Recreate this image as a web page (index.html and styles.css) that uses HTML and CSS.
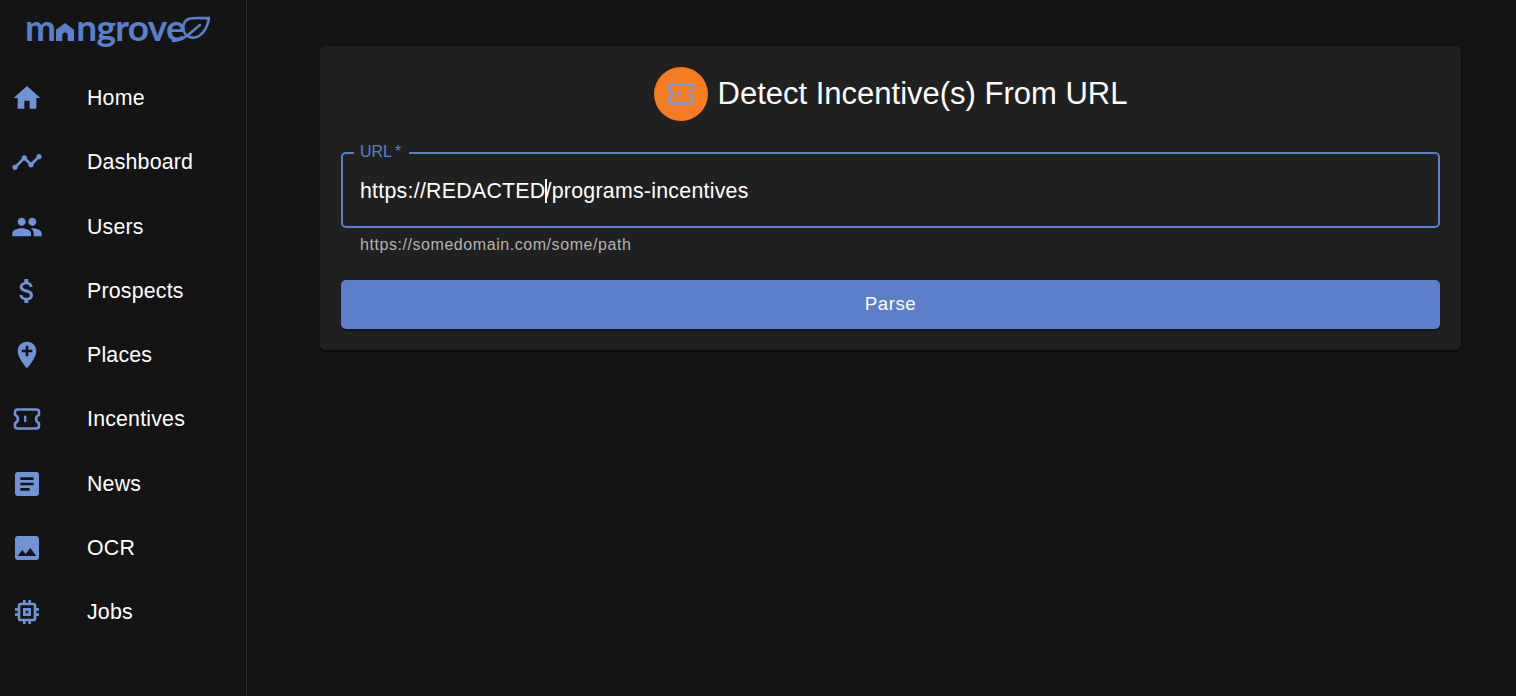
FILE: index.html
```html
<!DOCTYPE html>
<html lang="en">
<head>
    <meta charset="UTF-8">
    <title>Detect Incentives</title>
    <link rel="stylesheet" href="styles.css">
</head>

<body>
    <svg class="defs" width="0" height="0">
        <symbol id="ticket" viewBox="0 0 24 24">
            <path class="ticket-line" d="M5 4.900H19a2 2 0 0 1 2 2v2c-1.500.6-2.200 1.700-2.200 3.100s.7 2.500 2.200 3.100v2a2 2 0 0 1-2 2H5a2 2 0 0 1-2-2v-2c1.500-.6 2.200-1.700 2.200-3.100s-.7-2.500-2.200-3.100v-2a2 2 0 0 1 2-2z"/>
            <path d="M9.800 9.500h1.700v4.700H9.800z"/>
        </symbol>
    </svg>

    <aside class="sidebar">
        <div class="logo">
            <span class="logo-text">m<svg class="logo-house" viewBox="0 0 20 20"><path d="M10 0 20 7.500V20H13V13.500a3 3 0 0 0-6 0V20H0V7.500z"/></svg>ngrove</span>
            <svg class="logo-leaf" viewBox="0 0 40 30"><path d="M39 3C33 3.500 26 2.500 20 3.500 14 5 12 11 14 17 17 23 24 24 29 21 35 17 38 10 39 3z"/><path d="M3 26C10 26 14 23 18 20 22 17 26 13 30 10"/></svg>
        </div>
        <nav class="nav">
            <a class="nav-item"><svg class="nav-icon" viewBox="0 0 24 24"><path d="M10 20v-6h4v6h5v-8h3L12 3 2 12h3v8z"/></svg><span class="nav-label">Home</span></a>
            <a class="nav-item"><svg class="nav-icon" viewBox="0 0 24 24"><path d="M23 8c0 1.100-.9 2-2 2-.18 0-.35-.02-.51-.07l-3.560 3.550c.05.16.07.34.07.52 0 1.100-.9 2-2 2s-2-.9-2-2c0-.18.02-.36.07-.52l-2.550-2.550c-.16.05-.34.07-.52.07s-.36-.02-.52-.07l-4.550 4.560c.05.16.07.33.07.51 0 1.100-.9 2-2 2s-2-.9-2-2 .9-2 2-2c.18 0 .35.02.51.07l4.560-4.550C8.020 9.360 8 9.180 8 9c0-1.100.9-2 2-2s2 .9 2 2c0 .18-.02.36-.07.52l2.550 2.550c.16-.05.34-.07.52-.07s.36.02.52.07l3.550-3.560C19.020 8.350 19 8.180 19 8c0-1.100.9-2 2-2s2 .9 2 2z"/></svg><span class="nav-label">Dashboard</span></a>
            <a class="nav-item"><svg class="nav-icon" viewBox="0 0 24 24"><path d="M16 11c1.660 0 2.990-1.340 2.990-3S17.660 5 16 5c-1.660 0-3 1.340-3 3s1.340 3 3 3zm-8 0c1.660 0 2.990-1.340 2.990-3S9.660 5 8 5C6.340 5 5 6.340 5 8s1.340 3 3 3zm0 2c-2.330 0-7 1.170-7 3.500V19h14v-2.500c0-2.330-4.670-3.500-7-3.500zm8 0c-.29 0-.62.02-.97.05 1.160.84 1.970 1.970 1.970 3.450V19h6v-2.500c0-2.330-4.670-3.500-7-3.500z"/></svg><span class="nav-label">Users</span></a>
            <a class="nav-item"><svg class="nav-icon" viewBox="0 0 24 24"><path d="M11.800 10.900c-2.270-.59-3-1.200-3-2.150 0-1.090 1.010-1.850 2.700-1.850 1.780 0 2.440.85 2.500 2.100h2.210c-.07-1.720-1.120-3.300-3.210-3.810V3h-3v2.160c-1.940.42-3.500 1.680-3.500 3.610 0 2.310 1.910 3.460 4.700 4.130 2.500.6 3 1.480 3 2.410 0 .69-.49 1.790-2.700 1.790-2.060 0-2.870-.92-2.980-2.100h-2.200c.12 2.190 1.760 3.420 3.680 3.830V21h3v-2.150c1.950-.37 3.500-1.500 3.500-3.550 0-2.840-2.430-3.810-4.700-4.400z"/></svg><span class="nav-label">Prospects</span></a>
            <a class="nav-item"><svg class="nav-icon" viewBox="0 0 24 24"><path d="M12 2C8.140 2 5 5.140 5 9c0 5.250 7 13 7 13s7-7.750 7-13c0-3.860-3.140-7-7-7zm4 8h-3v3h-2v-3H8V8h3V5h2v3h3v2z"/></svg><span class="nav-label">Places</span></a>
            <a class="nav-item"><svg class="nav-icon"><use href="#ticket"/></svg><span class="nav-label">Incentives</span></a>
            <a class="nav-item"><svg class="nav-icon" viewBox="0 0 24 24"><path d="M19 3H5c-1.100 0-2 .9-2 2v14c0 1.100.9 2 2 2h14c1.100 0 2-.9 2-2V5c0-1.100-.9-2-2-2zm-5 14H7v-2h7v2zm3-4H7v-2h10v2zm0-4H7V7h10v2z"/></svg><span class="nav-label">News</span></a>
            <a class="nav-item"><svg class="nav-icon" viewBox="0 0 24 24"><path d="M21 19V5c0-1.100-.9-2-2-2H5c-1.100 0-2 .9-2 2v14c0 1.100.9 2 2 2h14c1.100 0 2-.9 2-2zM8.500 13.500l2.500 3.010L14.500 12l4.500 6H5l3.500-4.500z"/></svg><span class="nav-label">OCR</span></a>
            <a class="nav-item"><svg class="nav-icon" viewBox="0 0 24 24"><path d="M15 9H9v6h6V9zm-2 4h-2v-2h2v2zm8-2V9h-2V7c0-1.100-.9-2-2-2h-2V3h-2v2h-2V3H9v2H7c-1.100 0-2 .9-2 2v2H3v2h2v2H3v2h2v2c0 1.100.9 2 2 2h2v2h2v-2h2v2h2v-2h2c1.100 0 2-.9 2-2v-2h2v-2h-2v-2h2zm-4 6H7V7h10v10z"/></svg><span class="nav-label">Jobs</span></a>
        </nav>
    </aside>

    <main class="content">
        <section class="card">
            <header class="card-title">
                <span class="avatar"><svg class="avatar-icon"><use href="#ticket"/></svg></span>
                <h1>Detect Incentive(s) From URL</h1>
            </header>
            <div class="field">
                <span class="field-label">URL<span class="required">*</span></span>
                <div class="field-value">https://REDACTED<span class="caret"></span>/programs-incentives</div>
            </div>
            <p class="helper">https://somedomain.com/some/path</p>
            <button class="parse-btn">Parse</button>
        </section>
    </main>
</body></html>
```

FILE: styles.css
```css
* {
    box-sizing: border-box;
}

body {
    margin: 0;
    height: 696px;
    display: flex;
    overflow: hidden;
    background-color: #141414;
    color: #fff;
    font-family: "Liberation Sans", Arial, sans-serif;
}

.defs {
    position: absolute;
}

.ticket-line {
    fill: none;
    stroke: currentColor;
    stroke-width: 1.9;
    stroke-linejoin: round;
}

.sidebar {
    width: 247px;
    flex-shrink: 0;
    border-right: 1px solid #2c2c2c;
}

.logo {
    height: 66px;
    padding: 7px 0 0 25px;
    display: flex;
    align-items: flex-start;
    color: #5a7fcb;
}

.logo-text {
    display: flex;
    align-items: baseline;
    font-family: Lato, sans-serif;
    font-size: 37px;
    font-weight: 700;
    line-height: 40px;
    letter-spacing: -0.7px;
}

.logo-house {
    width: 18px;
    height: 18px;
    margin: 0 2px 0 1px;
    fill: #5a7fcb;
}

.logo-leaf {
    width: 40px;
    height: 30px;
    margin: 8px 0 0 -15px;
    fill: none;
    stroke: #5a7fcb;
    stroke-width: 2.6;
    stroke-linecap: round;
}

.nav-item {
    height: 64.25px;
    padding-left: 11px;
    display: flex;
    align-items: center;
    font-size: 21.33px;
    letter-spacing: 0.2px;
}

.nav-icon {
    width: 32px;
    height: 32px;
    margin-right: 44px;
    color: #7093d8;
    fill: #7093d8;
}

.nav-label {
    padding-top: 1px;
}

.content {
    flex: 1;
    padding: 46px 55px 0 73px;
}

.card {
    height: 304px;
    padding: 21px;
    background-color: #202020;
    border-radius: 5px;
    box-shadow: 0 2px 2px rgba(0, 0, 0, 0.4);
}

.card-title {
    display: flex;
    justify-content: center;
    align-items: center;
    gap: 10px;
    margin-bottom: 31px;
}

.card-title h1 {
    margin: 0;
    font-size: 31px;
    font-weight: 400;
    line-height: 54px;
}

.avatar {
    width: 54px;
    height: 54px;
    border-radius: 50%;
    background-color: #f57c20;
    display: flex;
    justify-content: center;
    align-items: center;
}

.avatar-icon {
    width: 32px;
    height: 32px;
    color: #7c9bdc;
    fill: #7c9bdc;
}

.field {
    position: relative;
    height: 76px;
    padding: 2px 17px 0;
    border: 2px solid #5a7fcb;
    border-radius: 5px;
    display: flex;
    align-items: center;
}

.field-label {
    position: absolute;
    left: 11px;
    top: -11px;
    padding: 0 8px 0 6px;
    background-color: #202020;
    color: #5a7fcb;
    font-size: 16px;
    line-height: 18px;
}

.required {
    margin-left: 3px;
}

.field-value {
    font-size: 21.33px;
    letter-spacing: 0.26px;
    white-space: nowrap;
}

.caret {
    display: inline-block;
    width: 2px;
    height: 24px;
    margin: 0 -1px;
    vertical-align: -5px;
    background-color: #fff;
}

.helper {
    margin: 6px 0 24px 19px;
    color: #b3b3b3;
    font-size: 16px;
    line-height: 22px;
    letter-spacing: 0.56px;
}

.parse-btn {
    display: block;
    width: 100%;
    height: 49px;
    padding: 0 0 2px;
    border: 0;
    border-radius: 5px;
    background-color: #5c7fcb;
    color: #fff;
    font-family: inherit;
    font-size: 18.67px;
    letter-spacing: 0.53px;
    box-shadow: 0 2px 2px rgba(0, 0, 0, 0.35);
}
```
